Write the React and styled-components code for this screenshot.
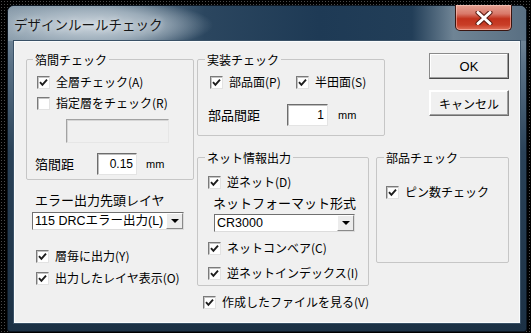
import React from 'react';
import styled, { createGlobalStyle } from 'styled-components';

const GlobalStyle = createGlobalStyle`
  html, body {
    margin: 0;
    padding: 0;
    width: 531px;
    height: 333px;
    overflow: hidden;
    background-color: #000;
    background-image: radial-gradient(#4a4a4a 0.7px, transparent 1px);
    background-size: 3px 3px;
  }
  * { box-sizing: border-box; }
`

const Window = styled.div`
  margin: 5px 0 0 7px;
  width: 520px;
  height: 327px;
  display: flex;
  flex-direction: column;
  border: 1px solid #0d1824;
  border-radius: 7px 7px 3px 3px;
  background: linear-gradient(180deg, #8b9dab 0%, #5a7186 18%, #2a4258 45%, #1c3145 100%);
  font-family: "Noto Sans CJK JP", "Noto Sans", sans-serif;
  color: #000;
`

const TitleBar = styled.div`
  height: 35px;
  display: flex;
  align-items: flex-start;
  justify-content: space-between;
  border-radius: 6px 6px 0 0;
  background:
    radial-gradient(ellipse 120px 26px at 85px 19px, rgba(210,218,225,0.95) 0%, rgba(176,190,201,0.75) 55%, rgba(140,160,176,0) 100%),
    linear-gradient(90deg, #8497a6 0%, #72889a 20%, #2b465f 38%, #1e3a55 60%, #223e58 78%, #6f8495 86%, #596f82 100%);
`

const Title = styled.div`
  padding: 8px 0 0 6px;
  font-size: 13.5px;
  line-height: 20px;
  color: #151515;
  text-shadow: 0 0 6px rgba(255,255,255,0.8);
`

const CloseButton = styled.div`
  width: 57px;
  height: 26px;
  margin-right: 14px;
  margin-top: -1px;
  display: flex;
  align-items: center;
  justify-content: center;
  border: 1px solid #3a1510;
  border-top: none;
  border-radius: 0 0 5px 5px;
  background: linear-gradient(180deg, #e6a293 0%, #d9796a 35%, #c2321d 55%, #c93e27 80%, #e0745d 100%);
  box-shadow: inset 0 0 0 1px rgba(255,210,200,0.5);
`

const Client = styled.div`
  flex: 1;
  margin: 0 6px 8px 6px;
  padding: 11px 10px 0 11px;
  display: flex;
  gap: 3px;
  background: #f0f0f0;
  border: 1px solid #f9fbfc;
  box-shadow: 0 0 0 1px #3a5166;
  font-size: 12px;
`

const LeftColumn = styled.div`
  width: 168px;
  display: flex;
  flex-direction: column;
`

const RightArea = styled.div`
  flex: 1;
  display: flex;
  flex-direction: column;
`

const TopRow = styled.div`
  height: 83px;
  display: flex;
  justify-content: space-between;
`

const BottomRow = styled.div`
  margin-top: 15px;
  display: flex;
  align-items: flex-start;
  gap: 7px;
`

const Group = styled.fieldset`
  margin: 0;
  width: ${p => p.$w}px;
  padding: ${p => p.$pad};
  border: 1px solid #c6c6c6;
  border-radius: 2px;
  min-inline-size: 0;
`

const Legend = styled.legend`
  margin-left: ${p => p.$ml}px;
  padding: 0 2px;
  font-size: 12px;
  line-height: 13px;
`

const Row = styled.div`
  display: flex;
  align-items: center;
  height: ${p => p.$h || 18}px;
  margin-top: ${p => p.$mt || 0}px;
  margin-left: ${p => p.$ml || 0}px;
`

const CheckItem = styled.div`
  display: flex;
  align-items: center;
  width: ${p => (p.$w ? `${p.$w}px` : 'auto')};
  flex-shrink: 0;
`

const Box = styled.span`
  width: 13px;
  height: 13px;
  flex-shrink: 0;
  display: flex;
  align-items: center;
  justify-content: center;
  background: #fff;
  border: 1px solid;
  border-color: #7a7a7a #e2e2e2 #e2e2e2 #7a7a7a;
  box-shadow: inset 1px 1px 0 #c4c4c4;
`

const CheckText = styled.span`
  margin-left: 6px;
  white-space: nowrap;
  line-height: 16px;
`

const FieldLabel = styled.span`
  width: ${p => p.$w}px;
  line-height: 16px;
  white-space: nowrap;
  font-size: 13px;
`

const NumberBox = styled.div`
  width: ${p => p.$w}px;
  height: 22px;
  padding: 0 3px;
  display: flex;
  align-items: center;
  justify-content: flex-end;
  background: #fff;
  border: 1px solid;
  border-color: #6d6d6d #e4e4e4 #e4e4e4 #6d6d6d;
  box-shadow: inset 1px 1px 0 #bdbdbd;
  font-family: "Liberation Sans", sans-serif;
  font-size: 12px;
`

const Unit = styled.span`
  margin-left: ${p => p.$ml}px;
  font-family: "Liberation Sans", sans-serif;
  font-size: 11px;
`

const DisabledBox = styled.div`
  width: 103px;
  height: 24px;
  margin: 7px 0 0 31px;
  background: #f0f0f0;
  border: 1px solid;
  border-color: #a2a2a2 #e6e6e6 #e6e6e6 #a2a2a2;
  box-shadow: inset 1px 1px 0 #d6d6d6;
`

const Select = styled.div`
  width: ${p => p.$w}px;
  height: 18px;
  margin-top: ${p => p.$mt}px;
  margin-left: ${p => p.$ml}px;
  display: flex;
  align-items: stretch;
  background: #fff;
  border: 1px solid;
  border-color: #707070 #dcdcdc #dcdcdc #707070;
`

const SelectValue = styled.span`
  flex: 1;
  padding-left: 2px;
  overflow: hidden;
  white-space: nowrap;
  line-height: 16px;
  font-size: 12.5px;
  font-family: "Liberation Sans", "Noto Sans CJK JP", sans-serif;
`

const SelectButton = styled.span`
  width: 17px;
  flex-shrink: 0;
  display: flex;
  align-items: center;
  justify-content: center;
  background: #ececec;
  border: 1px solid;
  border-color: #ffffff #8a8a8a #8a8a8a #ffffff;
  &::after {
    content: '';
    border-left: 4px solid transparent;
    border-right: 4px solid transparent;
    border-top: 4px solid #000;
  }
`

const ButtonColumn = styled.div`
  display: flex;
  flex-direction: column;
  gap: 11px;
`

const Button = styled.div`
  width: 80px;
  height: 26px;
  display: flex;
  align-items: center;
  justify-content: center;
  background: #f0f0f0;
  border: 1px solid;
  border-color: ${p => (p.$default ? '#8a8a8a #4a4a4a #4a4a4a #8a8a8a' : '#ffffff #6d6d6d #6d6d6d #ffffff')};
  box-shadow: inset -1px -1px 0 #a0a0a0, inset 1px 1px 0 #ffffff;
  font-size: ${p => p.$size}px;
  font-family: ${p => (p.$latin ? '"Liberation Sans", sans-serif' : 'inherit')};
`

const Check = ({ on }) => (
  <Box>
    {on && (
      <svg width="9" height="9" viewBox="0 0 9 9">
        <polyline points="1,4.2 3.4,6.8 8,1.6" fill="none" stroke="#1d1d1d" strokeWidth="1.9" />
      </svg>
    )}
  </Box>
)

const CheckBox = ({ on, label, w }) => (
  <CheckItem $w={w}>
    <Check on={on} />
    <CheckText>{label}</CheckText>
  </CheckItem>
)

export default function App() {
  return (
    <>
      <GlobalStyle />
      <Window>
        <TitleBar>
          <Title>デザインルールチェック</Title>
          <CloseButton>
            <svg width="18" height="14" viewBox="0 0 18 14">
              <path d="M3 1.5 L15 12.5 M15 1.5 L3 12.5" stroke="#5a1a10" strokeWidth="5" strokeLinecap="round" />
              <path d="M3 1.5 L15 12.5 M15 1.5 L3 12.5" stroke="#ffffff" strokeWidth="3" strokeLinecap="round" />
            </svg>
          </CloseButton>
        </TitleBar>
        <Client>
          <LeftColumn>
            <Group $w={168} $pad="7px 6px 4px 8px">
              <Legend $ml={-2}>箔間チェック</Legend>
              <Row $ml={2}><CheckBox on label="全層チェック(A)" /></Row>
              <Row $ml={2} $mt={3}><CheckBox label="指定層をチェック(R)" /></Row>
              <DisabledBox />
              <Row $h={22} $mt={10}>
                <FieldLabel $w={62}>箔間距</FieldLabel>
                <NumberBox $w={40}>0.15</NumberBox>
                <Unit $ml={9}>mm</Unit>
              </Row>
            </Group>
            <Row $mt={11} $ml={9}><FieldLabel $w={150}>エラー出力先頭レイヤ</FieldLabel></Row>
            <Select $w={152} $mt={3} $ml={6}>
              <SelectValue>115 DRCエラー出力(L)</SelectValue>
              <SelectButton />
            </Select>
            <Row $mt={17} $ml={10}><CheckBox on label="層毎に出力(Y)" /></Row>
            <Row $mt={4} $ml={10}><CheckBox on label="出力したレイヤ表示(O)" /></Row>
          </LeftColumn>
          <RightArea>
            <TopRow>
              <Group $w={188} $pad="7px 6px 8px 10px">
                <Legend $ml={-3}>実装チェック</Legend>
                <Row $ml={2}>
                  <CheckBox on label="部品面(P)" w={86} />
                  <CheckBox on label="半田面(S)" />
                </Row>
                <Row $h={22} $mt={13}>
                  <FieldLabel $w={79}>部品間距</FieldLabel>
                  <NumberBox $w={41}>1</NumberBox>
                  <Unit $ml={10}>mm</Unit>
                </Row>
              </Group>
              <ButtonColumn>
                <Button $default $latin $size={13}>OK</Button>
                <Button $size={12}>キャンセル</Button>
              </ButtonColumn>
            </TopRow>
            <BottomRow>
              <Group $w={172} $pad="9px 6px 3px 10px">
                <Legend $ml={-3}>ネット情報出力</Legend>
                <Row><CheckBox on label="逆ネット(D)" /></Row>
                <Row $mt={3} $ml={5}><FieldLabel $w={150}>ネットフォーマット形式</FieldLabel></Row>
                <Select $w={141} $mt={2} $ml={6}>
                  <SelectValue>CR3000</SelectValue>
                  <SelectButton />
                </Select>
                <Row $mt={7}><CheckBox on label="ネットコンベア(C)" /></Row>
                <Row $mt={7}><CheckBox on label="逆ネットインデックス(I)" /></Row>
              </Group>
              <Group $w={133} $pad="19px 6px 61px 9px">
                <Legend $ml={-2}>部品チェック</Legend>
                <Row><CheckBox on label="ピン数チェック" /></Row>
              </Group>
            </BottomRow>
            <Row $mt={7} $ml={6}><CheckBox on label="作成したファイルを見る(V)" /></Row>
          </RightArea>
        </Client>
      </Window>
    </>
  );
}
